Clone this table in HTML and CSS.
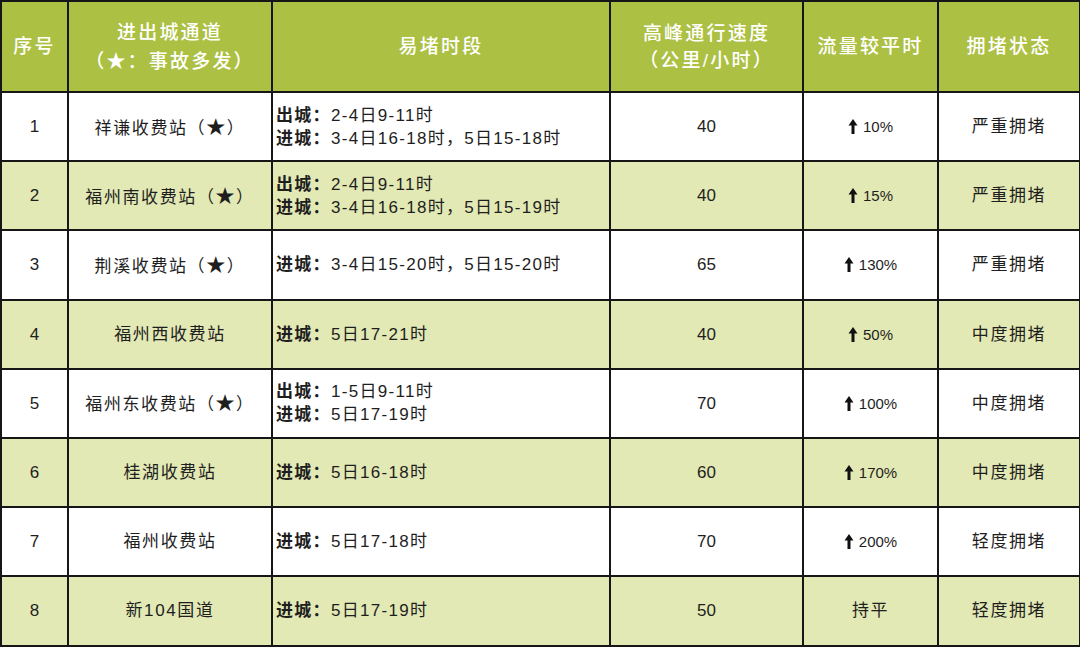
FILE: index.html
```html
<!DOCTYPE html>
<html lang="zh">
<head>
<meta charset="utf-8">
<link rel="stylesheet" href="styles.css">
</head>
<body>
<table class="grid">
  <colgroup>
    <col class="c-no"><col class="c-name"><col class="c-time"><col class="c-speed"><col class="c-flow"><col class="c-state">
  </colgroup>
  <thead>
    <tr>
      <th>序号</th>
      <th>进出城通道<br>（<span class="star">★</span>：事故多发）</th>
      <th>易堵时段</th>
      <th>高峰通行速度<br>（公里/小时）</th>
      <th>流量较平时</th>
      <th>拥堵状态</th>
    </tr>
  </thead>
  <tbody>
    <tr>
      <td class="num">1</td><td>祥谦收费站（<span class="star">★</span>）</td>
      <td class="time"><b>出城</b><b>：</b>2-4日9-11时<br><b>进城</b><b>：</b>3-4日16-18时，5日15-18时</td>
      <td class="num">40</td><td class="pct"><svg class="arr" viewBox="0 0 10 15" width="10" height="15"><path d="M5 0 L9.5 6.5 L6.5 6.5 L6.5 15 L3.5 15 L3.5 6.5 L0.5 6.5 Z"/></svg>10%</td><td>严重拥堵</td>
    </tr>
    <tr class="alt">
      <td class="num">2</td><td>福州南收费站（<span class="star">★</span>）</td>
      <td class="time"><b>出城</b><b>：</b>2-4日9-11时<br><b>进城</b><b>：</b>3-4日16-18时，5日15-19时</td>
      <td class="num">40</td><td class="pct"><svg class="arr" viewBox="0 0 10 15" width="10" height="15"><path d="M5 0 L9.5 6.5 L6.5 6.5 L6.5 15 L3.5 15 L3.5 6.5 L0.5 6.5 Z"/></svg>15%</td><td>严重拥堵</td>
    </tr>
    <tr>
      <td class="num">3</td><td>荆溪收费站（<span class="star">★</span>）</td>
      <td class="time"><b>进城</b><b>：</b>3-4日15-20时，5日15-20时</td>
      <td class="num">65</td><td class="pct"><svg class="arr" viewBox="0 0 10 15" width="10" height="15"><path d="M5 0 L9.5 6.5 L6.5 6.5 L6.5 15 L3.5 15 L3.5 6.5 L0.5 6.5 Z"/></svg>130%</td><td>严重拥堵</td>
    </tr>
    <tr class="alt">
      <td class="num">4</td><td>福州西收费站</td>
      <td class="time"><b>进城</b><b>：</b>5日17-21时</td>
      <td class="num">40</td><td class="pct"><svg class="arr" viewBox="0 0 10 15" width="10" height="15"><path d="M5 0 L9.5 6.5 L6.5 6.5 L6.5 15 L3.5 15 L3.5 6.5 L0.5 6.5 Z"/></svg>50%</td><td>中度拥堵</td>
    </tr>
    <tr>
      <td class="num">5</td><td>福州东收费站（<span class="star">★</span>）</td>
      <td class="time"><b>出城</b><b>：</b>1-5日9-11时<br><b>进城</b><b>：</b>5日17-19时</td>
      <td class="num">70</td><td class="pct"><svg class="arr" viewBox="0 0 10 15" width="10" height="15"><path d="M5 0 L9.5 6.5 L6.5 6.5 L6.5 15 L3.5 15 L3.5 6.5 L0.5 6.5 Z"/></svg>100%</td><td>中度拥堵</td>
    </tr>
    <tr class="alt">
      <td class="num">6</td><td>桂湖收费站</td>
      <td class="time"><b>进城</b><b>：</b>5日16-18时</td>
      <td class="num">60</td><td class="pct"><svg class="arr" viewBox="0 0 10 15" width="10" height="15"><path d="M5 0 L9.5 6.5 L6.5 6.5 L6.5 15 L3.5 15 L3.5 6.5 L0.5 6.5 Z"/></svg>170%</td><td>中度拥堵</td>
    </tr>
    <tr>
      <td class="num">7</td><td>福州收费站</td>
      <td class="time"><b>进城</b><b>：</b>5日17-18时</td>
      <td class="num">70</td><td class="pct"><svg class="arr" viewBox="0 0 10 15" width="10" height="15"><path d="M5 0 L9.5 6.5 L6.5 6.5 L6.5 15 L3.5 15 L3.5 6.5 L0.5 6.5 Z"/></svg>200%</td><td>轻度拥堵</td>
    </tr>
    <tr class="alt">
      <td class="num">8</td><td>新104国道</td>
      <td class="time"><b>进城</b><b>：</b>5日17-19时</td>
      <td class="num">50</td><td>持平</td><td>轻度拥堵</td>
    </tr>
  </tbody>
</table>
</body>
</html>
```
FILE: styles.css
```css
html, body {
  margin: 0;
  padding: 0;
  background: #ffffff;
}
.grid {
  border-collapse: collapse;
  table-layout: fixed;
  width: 1079px;
  margin: 0;
  font-family: "Liberation Sans", "Noto Sans CJK SC", sans-serif;
  color: #1e1e1e;
}
.c-no { width: 67px; }
.c-name { width: 204px; }
.c-time { width: 338px; }
.c-speed { width: 193px; }
.c-flow { width: 135px; }
.c-state { width: 142px; }

.grid th, .grid td {
  border: 2px solid #161616;
  text-align: center;
  vertical-align: middle;
  padding: 0;
}
.grid th {
  background: #acc043;
  color: #ffffff;
  font-weight: 500;
  font-size: 19px;
  letter-spacing: 2.2px;
  line-height: 27px;
  height: 89px;
}
.grid td {
  font-size: 17px;
  letter-spacing: 1.6px;
  line-height: 23px;
  height: 67.2px;
  background: #ffffff;
}
.grid tr.alt td {
  background: #e2e9b4;
}
.grid td.num {
  letter-spacing: 0;
}
.grid td.time {
  text-align: left;
  padding-left: 3px;
  letter-spacing: 1.3px;
}
.grid td.time b {
  font-weight: bold;
}
.grid td.pct {
  font-size: 15px;
  letter-spacing: 0;
}
.star {
  font-family: "Noto Sans CJK SC", sans-serif;
  font-size: 19px;
}
.arr {
  fill: #111111;
  vertical-align: -2px;
  margin-right: 5px;
}
```
